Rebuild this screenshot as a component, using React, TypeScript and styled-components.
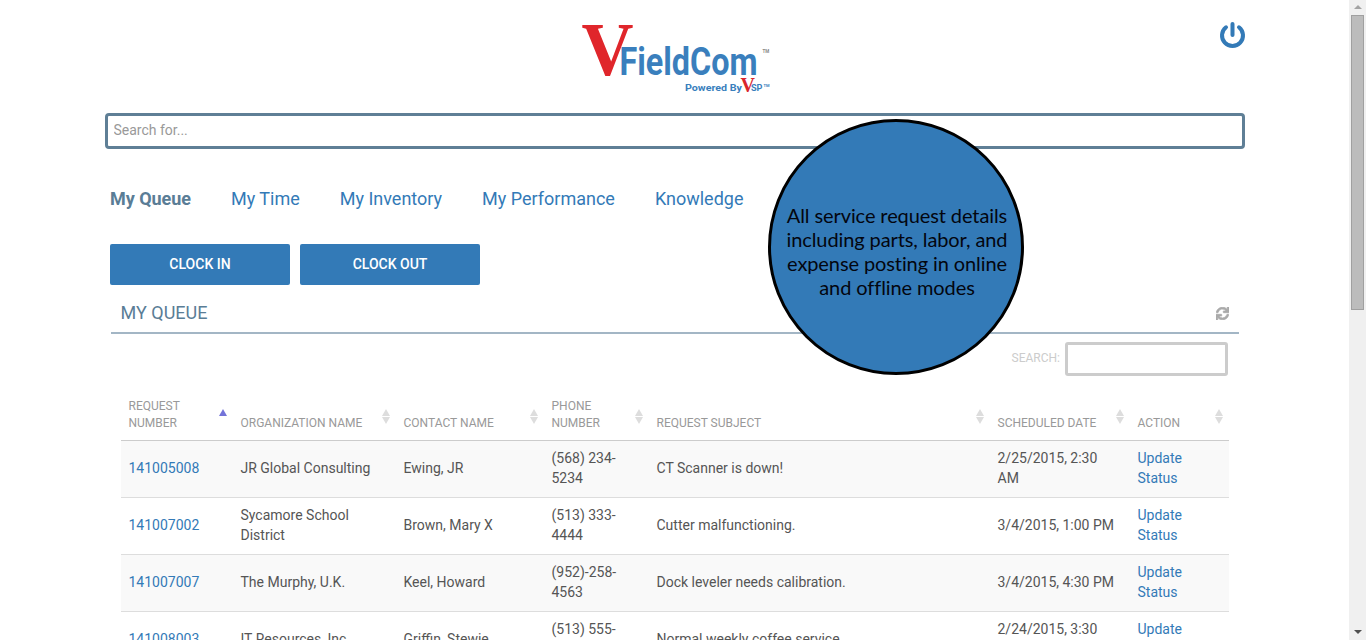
import React from 'react';
import styled, { createGlobalStyle } from 'styled-components';
import { FaSync } from 'react-icons/fa';

const GlobalStyle = createGlobalStyle`
  html, body {
    margin: 0;
    padding: 0;
    height: 640px;
    overflow: hidden;
    background: #fff;
    font-family: Roboto, "Liberation Sans", sans-serif;
  }
`;

const Shell = styled.div`
  display: flex;
  width: 1366px;
  height: 640px;
  overflow: hidden;
`;

const Page = styled.main`
  position: relative;
  width: 1349px;
  height: 640px;
  overflow: hidden;
  flex: none;
`;

const Header = styled.header`
  display: flex;
  justify-content: center;
  height: 113px;
  padding-top: 20px;
  box-sizing: border-box;
  position: relative;
`;

const PowerButton = styled.a`
  position: absolute;
  left: 1219px;
  top: 21px;
  display: block;
  width: 27px;
  height: 28px;
  color: #337ab7;
`;

const SearchWrap = styled.div`
  padding: 0 104px 0 105px;
`;

const SearchInput = styled.input`
  display: block;
  width: 100%;
  height: 36px;
  box-sizing: border-box;
  border: 3px solid #5f7f96;
  border-radius: 4px;
  padding: 0 5.5px 2px;
  font: 14px Roboto, sans-serif;
  color: #555;
  outline: none;
  &::placeholder {
    color: #999;
    opacity: 1;
  }
`;

const Nav = styled.nav`
  display: flex;
  gap: 40px;
  padding: 38px 0 0 110px;
  height: 57px;
  box-sizing: border-box;
`;

const NavLink = styled.a<{ $active?: boolean }>`
  font-size: 18px;
  line-height: 24px;
  height: 24px;
  font-weight: ${p => (p.$active ? 700 : 400)};
  letter-spacing: ${p => (p.$active ? '-0.05px' : '0')};
  color: ${p => (p.$active ? '#5a7d96' : '#337ab7')};
`;

const Actions = styled.div`
  display: flex;
  gap: 10px;
  padding: 38px 0 0 110px;
`;

const ActionButton = styled.button`
  width: 180px;
  height: 41px;
  border: 0;
  border-radius: 2px;
  background: #337ab7;
  color: #fff;
  font: 500 14px Roboto, sans-serif;
  padding: 0 0 1px;
`;

const Panel = styled.section`
  margin: 10px 110px 0 111px;
`;

const PanelHead = styled.div`
  display: flex;
  align-items: center;
  justify-content: space-between;
  height: 39px;
  box-sizing: border-box;
  padding: 0 10px 0 9.5px;
  border-bottom: 2px solid #a3b6c5;
  color: #5a7d96;
`;

const PanelTitle = styled.h2`
  margin: -2px 0 0;
  font-size: 18px;
  font-weight: 400;
  line-height: 20px;
`;

const RefreshIcon = styled(FaSync)`
  width: 13px;
  height: 13px;
  margin-top: -1px;
  color: #aaa;
  stroke: currentColor;
  stroke-width: 30px;
`;

const Filter = styled.label`
  display: flex;
  align-items: center;
  justify-content: flex-end;
  gap: 5px;
  padding: 8px 11px 0 0;
  font-size: 12px;
  color: #ccc;
`;

const FilterLabel = styled.span`
  margin-top: -2px;
`;

const FilterInput = styled.input`
  width: 163px;
  height: 34px;
  box-sizing: border-box;
  border: 3px solid #ccc;
  border-radius: 3px;
  outline: none;
`;

const Table = styled.table`
  width: 1108px;
  margin: 8px 0 0 10px;
  border-collapse: collapse;
  table-layout: fixed;
`;

const HeadCell = styled.th`
  position: relative;
  padding: 0 8px 8px 7.5px;
  height: 48px;
  box-sizing: content-box;
  vertical-align: bottom;
  text-align: left;
  font-size: 12px;
  font-weight: 400;
  line-height: 17px;
  color: #999;
  border-bottom: 1px solid #ccc;
`;

const SortIcon = styled.span<{ $active?: boolean }>`
  position: absolute;
  right: 6px;
  top: 25px;
  display: flex;
  flex-direction: column;
  gap: 1px;
  &::before,
  &::after {
    content: '';
    display: block;
    width: 0;
    height: 0;
    border-left: 4.5px solid transparent;
    border-right: 4.5px solid transparent;
  }
  &::before {
    border-bottom: 7px solid ${p => (p.$active ? '#7373d9' : '#ddd')};
  }
  &::after {
    border-top: 7px solid ${p => (p.$active ? 'transparent' : '#ddd')};
  }
`;

const Row = styled.tr<{ $odd: boolean }>`
  background: ${p => (p.$odd ? '#f9f9f9' : '#fff')};
`;

const Cell = styled.td`
  height: 57px;
  padding: 0 10px 2px 7.5px;
  box-sizing: border-box;
  font-size: 14px;
  line-height: 20px;
  color: #555;
  border-bottom: 1px solid #ddd;
`;

const Link = styled.a`
  color: #337ab7;
`;

const Callout = styled.aside`
  position: absolute;
  left: 768px;
  top: 119px;
  width: 256px;
  height: 256px;
  box-sizing: border-box;
  border: 3px solid #000;
  border-radius: 50%;
  background: #337ab7;
  display: flex;
  align-items: center;
  justify-content: center;
  text-align: center;
  font-family: Lato, "Open Sans", sans-serif;
  font-size: 20px;
  line-height: 24px;
  letter-spacing: -0.1px;
  color: #03060f;
`;

const CalloutText = styled.p`
  margin: 7px 0 0 2px;
  white-space: pre-line;
`;

const Scrollbar = styled.div`
  position: relative;
  width: 17px;
  height: 640px;
  flex: none;
  background: #f0f0f0;
`;

const ScrollArrow = styled.span<{ $down?: boolean }>`
  position: absolute;
  left: 5px;
  ${p => (p.$down ? 'bottom: 6px;' : 'top: 5px;')}
  width: 0;
  height: 0;
  border-left: 4px solid transparent;
  border-right: 4px solid transparent;
  ${p => (p.$down ? 'border-top: 4px solid #505050;' : 'border-bottom: 4px solid #a3a3a3;')}
`;

const ScrollThumb = styled.span`
  position: absolute;
  left: 2px;
  top: 15px;
  width: 13px;
  height: 295px;
  box-sizing: border-box;
  background: #bcbcbc;
  border: 1px solid #a0a0a0;
`;

const columns: { label: string; width: number; active?: boolean }[] = [
  { label: 'REQUEST NUMBER', width: 112, active: true },
  { label: 'ORGANIZATION NAME', width: 163 },
  { label: 'CONTACT NAME', width: 148 },
  { label: 'PHONE NUMBER', width: 105 },
  { label: 'REQUEST SUBJECT', width: 341 },
  { label: 'SCHEDULED DATE', width: 140 },
  { label: 'ACTION', width: 99 },
];

const rows = [
  ['141005008', 'JR Global Consulting', 'Ewing, JR', '(568) 234-5234', 'CT Scanner is down!', '2/25/2015, 2:30 AM'],
  ['141007002', 'Sycamore School District', 'Brown, Mary X', '(513) 333-4444', 'Cutter malfunctioning.', '3/4/2015, 1:00 PM'],
  ['141007007', 'The Murphy, U.K.', 'Keel, Howard', '(952)-258-4563', 'Dock leveler needs calibration.', '3/4/2015, 4:30 PM'],
  ['141008003', 'IT Resources, Inc.', 'Griffin, Stewie', '(513) 555-1212', 'Normal weekly coffee service', '2/24/2015, 3:30 PM'],
];

function Logo() {
  return (
    <svg width="200" height="80" viewBox="0 0 200 80">
      <text x="6.5" y="55" fontFamily="Liberation Serif" fontWeight="700" fontSize="76" fill="#e0262b" textLength="52" lengthAdjust="spacingAndGlyphs">V</text>
      <text x="44.5" y="55" fontFamily="Roboto" fontWeight="700" fontSize="38" fill="#3a7fbd" textLength="138" lengthAdjust="spacingAndGlyphs">FieldCom</text>
      <text x="187.5" y="33" fontFamily="Roboto" fontWeight="700" fontSize="4.5" fill="#888">TM</text>
      <text x="110" y="71" fontFamily="Roboto" fontWeight="700" fontSize="9.5" fill="#3a7fbd" textLength="57" lengthAdjust="spacingAndGlyphs">Powered By</text>
      <text x="165.5" y="72" fontFamily="Liberation Serif" fontWeight="700" fontSize="20" fill="#d9262c">V</text>
      <text x="176" y="71" fontFamily="Roboto" fontWeight="700" fontSize="9.5" fill="#3a7fbd" textLength="11.5" lengthAdjust="spacingAndGlyphs">SP</text>
      <text x="188.5" y="67" fontFamily="Roboto" fontWeight="700" fontSize="4" fill="#3a7fbd">TM</text>
    </svg>
  );
}

export default function App() {
  return (
    <Shell>
      <GlobalStyle />
      <Page>
        <Header>
          <Logo />
          <PowerButton>
            <svg width="27" height="28" viewBox="0 0 27 28" fill="none" stroke="currentColor" strokeLinecap="round">
              <path d="M7 6.25a10.5 10.5 0 1 0 13 0" strokeWidth="4" />
              <path d="M13.5 3v11" strokeWidth="4" />
            </svg>
          </PowerButton>
        </Header>
        <SearchWrap>
          <SearchInput placeholder="Search for..." />
        </SearchWrap>
        <Nav>
          <NavLink $active>My Queue</NavLink>
          <NavLink>My Time</NavLink>
          <NavLink>My Inventory</NavLink>
          <NavLink>My Performance</NavLink>
          <NavLink>Knowledge</NavLink>
        </Nav>
        <Actions>
          <ActionButton>CLOCK IN</ActionButton>
          <ActionButton>CLOCK OUT</ActionButton>
        </Actions>
        <Panel>
          <PanelHead>
            <PanelTitle>MY QUEUE</PanelTitle>
            <RefreshIcon />
          </PanelHead>
          <Filter>
            <FilterLabel>SEARCH:</FilterLabel>
            <FilterInput />
          </Filter>
          <Table>
            <colgroup>
              {columns.map(c => (
                <col key={c.label} width={c.width} />
              ))}
            </colgroup>
            <thead>
              <tr>
                {columns.map(c => (
                  <HeadCell key={c.label}>
                    {c.label}
                    <SortIcon $active={c.active} />
                  </HeadCell>
                ))}
              </tr>
            </thead>
            <tbody>
              {rows.map((r, i) => (
                <Row key={r[0]} $odd={i % 2 === 0}>
                  <Cell>
                    <Link>{r[0]}</Link>
                  </Cell>
                  {r.slice(1).map(v => (
                    <Cell key={v}>{v}</Cell>
                  ))}
                  <Cell>
                    <Link>Update Status</Link>
                  </Cell>
                </Row>
              ))}
            </tbody>
          </Table>
        </Panel>
        <Callout>
          <CalloutText>{'All service request details\nincluding parts, labor, and\nexpense posting in online\nand offline modes'}</CalloutText>
        </Callout>
      </Page>
      <Scrollbar>
        <ScrollArrow />
        <ScrollThumb />
        <ScrollArrow $down />
      </Scrollbar>
    </Shell>
  );
}
